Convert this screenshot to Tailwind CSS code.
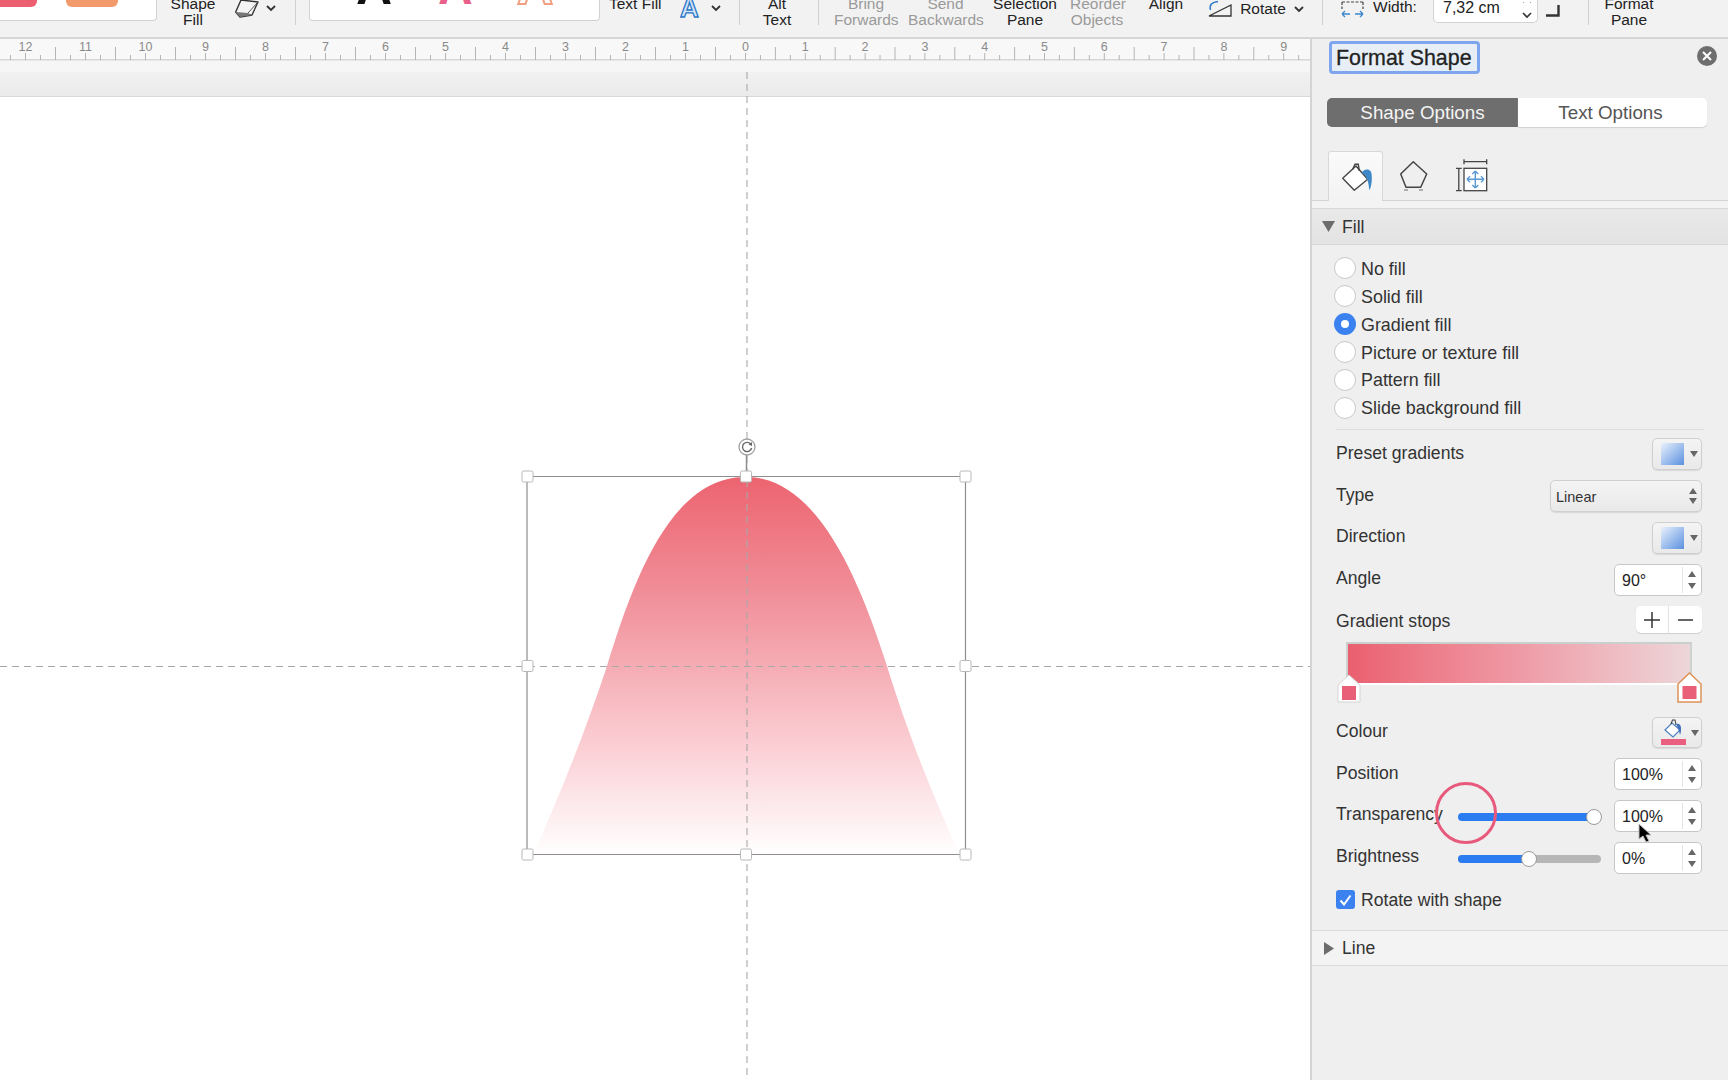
<!DOCTYPE html>
<html lang="en">
<head>
<meta charset="utf-8">
<title>Format Shape</title>
<script src="https://cdn.jsdelivr.net/npm/@tailwindcss/browser@4"></script>
</head>
<body class="bg-white">
<div class="w-[1728px] h-[1080px] overflow-hidden flex flex-col font-['Liberation_Sans',Arial,sans-serif] text-[#2a2a2a]">

  <!-- ribbon, its top is cut off in the picture -->
  <div class="h-[39px] shrink-0 bg-[#f2f2f2] border-b-2 border-[#d6d6d6] flex items-start overflow-hidden text-[15.5px] leading-[16px] text-center text-[#222]">
    <div class="w-[157px] h-[21px] shrink-0 bg-white border-r border-b border-[#d2d2d2] rounded-br-[4px] flex items-start">
      <div class="w-[37px] h-[7px] bg-[#ec5f70] rounded-br-[6px]"></div>
      <div class="ml-[29px] w-[52px] h-[7px] bg-[#f29a6c] rounded-b-[6px]"></div>
    </div>
    <div class="w-[72px] shrink-0 -mt-[4px]">Shape<br>Fill</div>
    <div class="w-[66px] shrink-0 pl-[6px] flex items-start">
      <svg class="w-[24px] h-[18px]" viewBox="0 0 24 18"><path d="M6 0 23 2 17 15 5 17 .7 12z" fill="#f4f4f4" stroke="#333" stroke-width="1.400" stroke-linejoin="round"/><path d="M.7 12 13 13l4 2-12 2z" fill="#777"/><path d="M13 13 23 2" stroke="#555" stroke-width="1"/></svg>
      <svg class="ml-[7px] mt-[5px] w-[10px] h-[7px]" viewBox="0 0 10 7"><path d="M1 1l4 4 4-4" fill="none" stroke="#333" stroke-width="1.800"/></svg>
    </div>
    <div class="w-px h-[25px] shrink-0 bg-[#d0d0d0]"></div>
    <div class="ml-[13px] w-[291px] h-[21px] shrink-0 bg-white border border-t-0 border-[#d2d2d2] rounded-b-[4px] overflow-hidden">
      <svg class="w-[290px] h-[20px] font-['Liberation_Sans',Arial,sans-serif]" viewBox="0 0 290 20">
        <text x="46" y="4" font-size="50" font-weight="700" fill="#111">A</text>
        <text x="128" y="4" font-size="48" font-weight="700" fill="#e8608a">A</text>
        <text x="207" y="4" font-size="50" font-weight="700" fill="#fff" stroke="#f0a080" stroke-width="2">A</text>
      </svg>
    </div>
    <div class="ml-[9px] w-[60px] shrink-0 -mt-[4px] whitespace-nowrap text-left">Text Fill</div>
    <svg class="ml-[11px] w-[21px] h-[18px] shrink-0 font-['Liberation_Sans',Arial,sans-serif]" viewBox="0 0 21 18"><text x="0" y="17" font-size="26" font-weight="700" fill="#d4e4f6" stroke="#2a78c8" stroke-width="1.300">A</text></svg>
    <svg class="ml-[10px] mt-[5px] w-[10px] h-[7px] shrink-0" viewBox="0 0 10 7"><path d="M1 1l4 4 4-4" fill="none" stroke="#333" stroke-width="1.800"/></svg>
    <div class="ml-[18px] w-px h-[25px] shrink-0 bg-[#d0d0d0]"></div>
    <div class="w-[74px] shrink-0 -mt-[4px]">Alt<br>Text</div>
    <div class="ml-[4px] w-px h-[25px] shrink-0 bg-[#d0d0d0]"></div>
    <div class="ml-[15px] w-[64px] shrink-0 -mt-[4px] text-[#9a9a9a]">Bring<br>Forwards</div>
    <div class="ml-[10px] w-[75px] shrink-0 -mt-[4px] text-[#9a9a9a]">Send<br>Backwards</div>
    <div class="ml-[10px] w-[64px] shrink-0 -mt-[4px]">Selection<br>Pane</div>
    <div class="ml-[13px] w-[54px] shrink-0 -mt-[4px] text-[#9a9a9a]">Reorder<br>Objects</div>
    <div class="ml-[18px] w-[48px] shrink-0 -mt-[4px]">Align</div>
    <svg class="ml-[18px] w-[24px] h-[18px] shrink-0" viewBox="0 0 24 18"><path d="M1 16 23 5v11z" fill="none" stroke="#333" stroke-width="1.300"/><path d="M2.500 10C1 5 4 2 10 1.500" fill="none" stroke="#2a78c8" stroke-width="1.500"/></svg>
    <div class="ml-[5px] w-[52px] shrink-0 mt-[1px]">Rotate</div>
    <svg class="ml-[5px] mt-[6px] w-[10px] h-[7px] shrink-0" viewBox="0 0 10 7"><path d="M1 1l4 4 4-4" fill="none" stroke="#333" stroke-width="1.800"/></svg>
    <div class="ml-[18px] w-px h-[25px] shrink-0 bg-[#d0d0d0]"></div>
    <svg class="ml-[18px] w-[23px] h-[18px] shrink-0" viewBox="0 0 23 18"><path d="M1 2h21M1 2v7M22 2v7" fill="none" stroke="#444" stroke-width="1.200" stroke-dasharray="3 1.500"/><path d="M1 14h8M14 14h8M1 14l3-3M1 14l3 3M22 14l-3-3M22 14l-3 3" fill="none" stroke="#3b86cc" stroke-width="1.300"/></svg>
    <div class="ml-[9px] w-[44px] shrink-0 mt-[-1px] text-left">Width:</div>
    <div class="ml-[16px] w-[105px] h-[23px] shrink-0 bg-white border border-t-0 border-[#d2d2d2] rounded-b-[5px] flex items-start pl-[9px] text-[16px] text-left">
      <span class="flex-1">7,32 cm</span>
      <svg class="mt-[2px] mr-[5px] w-[10px] h-[18px]" viewBox="0 0 10 18"><path d="M1 0l4-3 4 3M1 11l4 4 4-4" fill="none" stroke="#333" stroke-width="1.600"/></svg>
    </div>
    <svg class="ml-[8px] mt-[5px] w-[14px] h-[12px] shrink-0" viewBox="0 0 14 12"><path d="M0 10.500h12.500V0" fill="none" stroke="#333" stroke-width="2.400"/></svg>
    <div class="ml-[28px] w-px h-[25px] shrink-0 bg-[#d0d0d0]"></div>
    <div class="w-[80px] shrink-0 -mt-[4px]">Format<br>Pane</div>
  </div>

  <div class="flex flex-1 min-h-0">
    <!-- slide area -->
    <div class="w-[1310px] shrink-0 flex flex-col">
      <svg id="ruler" class="w-[1310px] h-[21px] shrink-0 bg-[#f8f8f8] font-['Liberation_Sans',Arial,sans-serif]" viewBox="0 39 1310 21"></svg>
      <div class="relative flex-1 flex flex-col">
        <div class="h-[12px] bg-[#f6f6f6] border-t border-[#e6e6e6]"></div>
        <div class="h-[25px] bg-linear-to-b from-[#f1f1f1] to-[#ebebeb] border-b border-[#d9d9d9]"></div>
        <div class="flex-1 bg-white"></div>
        <svg class="absolute left-0 top-0 w-[1310px] h-[1020px]" viewBox="0 60 1310 1020">
          <defs>
            <linearGradient id="bell" x1="0" y1="0" x2="0" y2="1">
              <stop offset="0" stop-color="#ec6470"/>
              <stop offset="0.3" stop-color="#f08d97"/>
              <stop offset="0.5" stop-color="#f5acb4"/>
              <stop offset="0.72" stop-color="#fbd0d5"/>
              <stop offset="0.9" stop-color="#fdeef0"/>
              <stop offset="1" stop-color="#ffffff"/>
            </linearGradient>
          </defs>
          <path d="M533 855C560 795 587 727 607 666C635 575 672 477 746 477C815 477 857 572 887 666C905 725 932 795 960 855Z" fill="url(#bell)"/>
          <g fill="none" stroke="#a8a8a8" stroke-width="1.100" stroke-dasharray="7 5">
            <path d="M747 72V1080"/>
            <path d="M0 666.500H1310"/>
          </g>
          <path d="M527 476.500H965.500V854.500H527Z" fill="none" stroke="#8e8e8e" stroke-width="1.200"/>
          <path d="M746.500 455V476" stroke="#8f8f8f" stroke-width="1.500"/>
          <g fill="#fff" stroke="#b8b8b8" stroke-width="1">
            <rect x="522" y="471" width="11" height="11" rx="1.500"/>
            <rect x="740.500" y="471" width="11" height="11" rx="1.500"/>
            <rect x="960" y="471" width="11" height="11" rx="1.500"/>
            <rect x="522" y="660.500" width="11" height="11" rx="1.500"/>
            <rect x="960" y="660.500" width="11" height="11" rx="1.500"/>
            <rect x="522" y="849" width="11" height="11" rx="1.500"/>
            <rect x="740.500" y="849" width="11" height="11" rx="1.500"/>
            <rect x="960" y="849" width="11" height="11" rx="1.500"/>
          </g>
          <circle cx="747" cy="447" r="8" fill="#fff" stroke="#a0a0a0" stroke-width="1.300"/>
          <path d="M751 444.500a4.600 4.600 0 1 0 .6 3.500" fill="none" stroke="#666" stroke-width="1.400"/>
          <path d="M748.500 444.500l3.500-2.500v4z" fill="#666"/>
        </svg>
      </div>
    </div>

    <!-- format pane -->
    <div class="w-[418px] shrink-0 bg-[#efefef] border-l-2 border-[#d4d4d4] flex flex-col text-[17.6px] leading-[22px] text-[#333]">
      <div class="h-[59px] shrink-0 flex items-start pl-[17px] pr-[11px] pt-[2px]">
        <div class="w-[151px] h-[33px] border-[3px] border-[#7ea6ee] rounded-[4px] bg-[#e8eef6] text-[21.4px] leading-[29px] text-[#222] pl-[4px] whitespace-nowrap [-webkit-text-stroke:0.3px_#222]">Format Shape</div>
        <div class="ml-auto mt-[5px] w-[20px] h-[20px] rounded-full bg-[#6e6e6e] flex items-center justify-center">
          <svg class="w-[10px] h-[10px]" viewBox="0 0 10 10"><path d="M1 1l8 8M9 1l-8 8" stroke="#fff" stroke-width="2"/></svg>
        </div>
      </div>
      <div class="ml-[15px] w-[380px] h-[29px] shrink-0 flex text-[18.8px] leading-[29px] text-center">
        <div class="w-[191px] bg-[#6e6e6e] text-[#f4f4f4] rounded-l-[5px]">Shape Options</div>
        <div class="w-[189px] pr-[4px] bg-white text-[#555] rounded-r-[5px] shadow-[0_1px_1px_#d0d0d0]">Text Options</div>
      </div>
      <div class="mt-[24px] h-[50px] shrink-0 border-b border-[#d2d2d2] flex items-end pl-[16px]">
        <div class="w-[55px] h-[50px] -mb-px bg-linear-to-b from-[#fafafa] to-[#f3f3f3] border border-b-0 border-[#d8d8d8] rounded-t-[3px] flex items-center justify-center">
          <svg class="w-[32px] h-[30px]" viewBox="0 0 32 30"><path d="M2.700 16.300 16 4 27.700 17.300 14.300 28.300z" fill="#fff" stroke="#444" stroke-width="1.400" stroke-linejoin="round"/><path d="M12.700 7.300 15 2.300h3.300L19.300 9" fill="none" stroke="#444" stroke-width="1.400"/><path d="M21.700 10.700C23 8 28 5.500 31 9.700 32.500 14 32 24 29.300 28.300 29 24 28 19 27 17.300 26 14 24 12 21.700 10.700z" fill="#3f88c8"/></svg>
        </div>
        <svg class="ml-[15px] mb-[9px] w-[30px] h-[32px]" viewBox="0 0 30 32"><path d="M15.300 2.700 28.700 15 22.700 28.300H8L2.700 15z" fill="none" stroke="#444" stroke-width="1.500" stroke-linejoin="round"/><path d="M6 31h4M21 31h4" stroke="#999" stroke-width="1.500"/></svg>
        <svg class="ml-[28px] mb-[7px] w-[34px] h-[34px]" viewBox="0 0 34 34"><path d="M8 2.700h22.700M8 .3v5M30.700 .3v5M2.800 9.300v22.400M0 9.300h5.700M0 31.700h5.700" fill="none" stroke="#444" stroke-width="1.300"/><rect x="8" y="9.300" width="22.700" height="22.400" fill="#fff" stroke="#444" stroke-width="1.300"/><path d="M19.300 12v17M11 20.300h17M19.300 12l-3 3M19.300 12l3 3M19.300 29l-3-3M19.300 29l3-3M11 20.300l3-3M11 20.300l3 3M28 20.300l-3-3M28 20.300l-3 3" fill="none" stroke="#5b9bd5" stroke-width="1.400"/></svg>
      </div>
      <div class="h-[7px] shrink-0 bg-[#f3f3f3]"></div>
      <div class="h-[37px] shrink-0 bg-linear-to-b from-[#e9e9e9] to-[#e3e3e3] border-y border-[#d8d8d8] flex items-center pl-[10px]">
        <svg class="w-[13px] h-[11px]" viewBox="0 0 13 11"><path d="M0 0h13L6.500 11z" fill="#6c6c6c"/></svg>
        <span class="ml-[7px]">Fill</span>
      </div>

      <div class="mt-[12px] ml-[22px] flex flex-col gap-[6px] shrink-0 text-[17.9px]">
        <div class="h-[22px] flex items-center"><span class="w-[22px] h-[22px] rounded-full bg-white border border-[#c9c9c9]"></span><span class="ml-[5px] pt-[1px]">No fill</span></div>
        <div class="h-[22px] flex items-center"><span class="w-[22px] h-[22px] rounded-full bg-white border border-[#c9c9c9]"></span><span class="ml-[5px] pt-[1px]">Solid fill</span></div>
        <div class="h-[22px] flex items-center"><span class="w-[22px] h-[22px] rounded-full bg-[#3b82f0] flex items-center justify-center"><span class="w-[8px] h-[8px] rounded-full bg-white"></span></span><span class="ml-[5px] pt-[1px]">Gradient fill</span></div>
        <div class="h-[22px] flex items-center"><span class="w-[22px] h-[22px] rounded-full bg-white border border-[#c9c9c9]"></span><span class="ml-[5px] pt-[1px]">Picture or texture fill</span></div>
        <div class="h-[22px] flex items-center"><span class="w-[22px] h-[22px] rounded-full bg-white border border-[#c9c9c9]"></span><span class="ml-[5px]">Pattern fill</span></div>
        <div class="h-[22px] flex items-center"><span class="w-[22px] h-[22px] rounded-full bg-white border border-[#c9c9c9]"></span><span class="ml-[5px]">Slide background fill</span></div>
      </div>
      <div class="mt-[10px] ml-[24px] mr-[24px] h-px shrink-0 bg-[#dcdcdc]"></div>

      <div class="mt-[8px] ml-[24px] mr-[26px] flex flex-col gap-[10px] shrink-0">
        <div class="h-[32px] flex items-center justify-between">
          <span class="pb-[3px]">Preset gradients</span>
          <div class="w-[50px] h-[32px] rounded-[5px] border border-[#cfcfcf] bg-linear-to-b from-[#f4f4f4] to-[#e9e9e9] flex items-center pl-[8px] shadow-[0_1px_1px_#d8d8d8]">
            <span class="w-[23px] h-[22px] bg-linear-to-br from-[#eaf1fb] to-[#5b90de]"></span>
            <svg class="ml-[6px] w-[8px] h-[6px]" viewBox="0 0 8 6"><path d="M0 0h8L4 6z" fill="#666"/></svg>
          </div>
        </div>
        <div class="h-[32px] flex items-center justify-between">
          <span class="pb-[3px]">Type</span>
          <div class="w-[152px] h-[32px] rounded-[5px] border border-[#cfcfcf] bg-linear-to-b from-[#f4f4f4] to-[#e9e9e9] flex items-center pl-[5px] pr-[4px] text-[14.5px] text-[#333] shadow-[0_1px_1px_#d8d8d8]">
            <span class="flex-1 pt-[2px]">Linear</span>
            <span class="flex flex-col gap-[4px]">
              <svg class="w-[8px] h-[6px]" viewBox="0 0 8 6"><path d="M4 0l4 6H0z" fill="#666"/></svg>
              <svg class="w-[8px] h-[6px]" viewBox="0 0 8 6"><path d="M0 0h8L4 6z" fill="#666"/></svg>
            </span>
          </div>
        </div>
        <div class="h-[32px] flex items-center justify-between">
          <span class="pb-[5px]">Direction</span>
          <div class="w-[50px] h-[32px] rounded-[5px] border border-[#cfcfcf] bg-linear-to-b from-[#f4f4f4] to-[#e9e9e9] flex items-center pl-[8px] shadow-[0_1px_1px_#d8d8d8]">
            <span class="w-[23px] h-[22px] bg-linear-to-br from-[#eaf1fb] to-[#5b90de]"></span>
            <svg class="ml-[6px] w-[8px] h-[6px]" viewBox="0 0 8 6"><path d="M0 0h8L4 6z" fill="#666"/></svg>
          </div>
        </div>
        <div class="h-[32px] flex items-center justify-between">
          <span class="pb-[5px]">Angle</span>
          <div class="w-[88px] h-[32px] rounded-[5px] border border-[#c6c6c6] bg-white flex items-center pl-[7px] text-[16px] text-[#222]">
            <span class="flex-1 pt-[2px]">90°</span>
            <span class="w-[19px] h-[26px] border-l border-[#e4e4e4] flex flex-col items-center justify-center gap-[6px]">
              <svg class="w-[8px] h-[6px]" viewBox="0 0 8 6"><path d="M4 0l4 6H0z" fill="#666"/></svg>
              <svg class="w-[8px] h-[6px]" viewBox="0 0 8 6"><path d="M0 0h8L4 6z" fill="#666"/></svg>
            </span>
          </div>
        </div>
        <div class="h-[27px] flex items-center justify-between">
          <span class="pt-[3px]">Gradient stops</span>
          <div class="w-[66px] h-[27px] rounded-[5px] bg-white flex items-center shadow-[0_1px_1px_#cfcfcf]">
            <span class="w-[33px] h-[27px] border-r border-[#e2e2e2] flex items-center justify-center"><svg class="w-[16px] h-[16px]" viewBox="0 0 16 16"><path d="M8 0v16M0 8h16" stroke="#333" stroke-width="1.500"/></svg></span>
            <span class="flex-1 flex items-center justify-center"><svg class="w-[15px] h-[2px]" viewBox="0 0 15 2"><path d="M0 1h15" stroke="#333" stroke-width="1.500"/></svg></span>
          </div>
        </div>
      </div>

      <!-- gradient stop bar -->
      <div class="relative mt-[9px] ml-[34px] w-[346px] h-[61px] shrink-0">
        <div class="h-[43px] border-2 border-t-[#c8cfcd] border-x-[#ccd2d0] border-b-white bg-linear-to-r from-[#ea5f70] via-[#ee9aa6] to-[#ecd6d9]"></div>
        <svg class="absolute -left-[9px] top-[32px] w-[24px] h-[30px]" viewBox="0 0 24 30"><path d="M1 11 12 1l11 10v17H1z" fill="#fff" stroke="#d4d4d4"/><rect x="5" y="12" width="14" height="14" fill="#e95f78"/></svg>
        <svg class="absolute left-[331px] top-[30px] w-[25px] h-[32px]" viewBox="0 0 25 32"><path d="M1 12 12.500 1 24 12v18H1z" fill="#fff" stroke="#dd9258" stroke-width="1.500"/><rect x="5.500" y="14" width="14" height="13" fill="#e95f78"/></svg>
      </div>

      <div class="mt-[14px] ml-[24px] mr-[26px] flex flex-col gap-[10px] shrink-0">
        <div class="h-[31px] flex items-center justify-between">
          <span class="pb-[3px]">Colour</span>
          <div class="w-[50px] h-[31px] rounded-[5px] border border-[#cfcfcf] bg-linear-to-b from-[#f4f4f4] to-[#e9e9e9] flex items-center pl-[7px] shadow-[0_1px_1px_#d8d8d8]">
            <span class="w-[26px] h-[27px] flex flex-col items-center">
              <svg class="w-[20px] h-[20px]" viewBox="0 0 20 20"><path d="M2 11 9 4l8 7-7 7z" fill="#fff" stroke="#4a7fc0" stroke-width="1.200"/><path d="M8 5 9.500 1h2.500L13 6" fill="none" stroke="#444" stroke-width="1.100"/><path d="M13 5c3-1 5 1 5 4 0 2 0 5-1 7-.5-3-1-5-4-11z" fill="#3f70b8"/></svg>
              <span class="w-[25px] h-[6px] bg-[#ea5f80]"></span>
            </span>
            <svg class="ml-[5px] w-[8px] h-[6px]" viewBox="0 0 8 6"><path d="M0 0h8L4 6z" fill="#666"/></svg>
          </div>
        </div>
        <div class="h-[32px] flex items-center justify-between">
          <span class="pb-[3px]">Position</span>
          <div class="w-[88px] h-[32px] rounded-[5px] border border-[#c6c6c6] bg-white flex items-center pl-[7px] text-[16px] text-[#222]">
            <span class="flex-1 pt-[2px]">100%</span>
            <span class="w-[19px] h-[26px] border-l border-[#e4e4e4] flex flex-col items-center justify-center gap-[6px]">
              <svg class="w-[8px] h-[6px]" viewBox="0 0 8 6"><path d="M4 0l4 6H0z" fill="#666"/></svg>
              <svg class="w-[8px] h-[6px]" viewBox="0 0 8 6"><path d="M0 0h8L4 6z" fill="#666"/></svg>
            </span>
          </div>
        </div>
        <div class="h-[32px] flex items-center">
          <span class="flex-1 pb-[4px] whitespace-nowrap">Transparency</span>
          <div class="relative w-[143px] h-[8px] mt-[2px] rounded-full bg-[#2b7cf0] mr-[13px]">
            <span class="absolute -right-[1px] -top-[4px] w-[16px] h-[16px] rounded-full bg-white border border-[#9a9a9a]"></span>
            <span class="absolute -left-[23px] -top-[31px] w-[62px] h-[62px] rounded-full border-[3px] border-[#e85a7c]"></span>
          </div>
          <div class="relative w-[88px] h-[32px] rounded-[5px] border border-[#c6c6c6] bg-white flex items-center pl-[7px] text-[16px] text-[#222]">
            <span class="flex-1 pt-[2px]">100%</span>
            <span class="w-[19px] h-[26px] border-l border-[#e4e4e4] flex flex-col items-center justify-center gap-[6px]">
              <svg class="w-[8px] h-[6px]" viewBox="0 0 8 6"><path d="M4 0l4 6H0z" fill="#666"/></svg>
              <svg class="w-[8px] h-[6px]" viewBox="0 0 8 6"><path d="M0 0h8L4 6z" fill="#666"/></svg>
            </span>
            <svg class="absolute left-[22px] top-[21px] w-[16px] h-[24px]" viewBox="0 0 16 24"><path d="M2 2v15l4-3 3 6 3-1-3-6h5z" fill="#000" stroke="#bbb" stroke-width="1"/></svg>
          </div>
        </div>
        <div class="h-[32px] flex items-center">
          <span class="flex-1 pb-[5px]">Brightness</span>
          <div class="relative w-[143px] h-[8px] mt-[2px] rounded-full bg-[#b6b6b6] mr-[13px]">
            <div class="w-[71px] h-[8px] rounded-l-full bg-[#2b7cf0]"></div>
            <span class="absolute left-[63px] -top-[4px] w-[16px] h-[16px] rounded-full bg-white border border-[#9a9a9a]"></span>
          </div>
          <div class="w-[88px] h-[32px] rounded-[5px] border border-[#c6c6c6] bg-white flex items-center pl-[7px] text-[16px] text-[#222]">
            <span class="flex-1 pt-[2px]">0%</span>
            <span class="w-[19px] h-[26px] border-l border-[#e4e4e4] flex flex-col items-center justify-center gap-[6px]">
              <svg class="w-[8px] h-[6px]" viewBox="0 0 8 6"><path d="M4 0l4 6H0z" fill="#666"/></svg>
              <svg class="w-[8px] h-[6px]" viewBox="0 0 8 6"><path d="M0 0h8L4 6z" fill="#666"/></svg>
            </span>
          </div>
        </div>
      </div>

      <div class="mt-[16px] ml-[24px] h-[19px] flex items-center shrink-0">
        <span class="w-[19px] h-[19px] rounded-[3px] bg-[#3b82f0] flex items-center justify-center">
          <svg class="w-[13px] h-[12px]" viewBox="0 0 13 12"><path d="M1.500 6.500 5 10.500 11.500 1.500" fill="none" stroke="#fff" stroke-width="2"/></svg>
        </span>
        <span class="ml-[6px] pt-[1px]">Rotate with shape</span>
      </div>

      <div class="mt-[21px] h-[36px] shrink-0 bg-[#f3f3f3] border-y border-[#d9d9d9] flex items-center pl-[12px]">
        <svg class="w-[10px] h-[13px]" viewBox="0 0 10 13"><path d="M0 0l10 6.500L0 13z" fill="#6c6c6c"/></svg>
        <span class="ml-[8px]">Line</span>
      </div>
    </div>
  </div>
</div>

<script>
  // Ruler: one label per unit around the 0 at x=745, with half and quarter ticks
  const ruler = document.getElementById('ruler');
  const zero = 745.5;
  let out = '<path d="M0 59.500H1310" stroke="#d8d8d8"/>';
  for (let q = -52; q <= 40; q++) {
    const unit = q < 0 ? 60 : 59.8;
    const x = zero + q * unit / 4;
    if (x < 0 || x > 1308) continue;
    const top = q % 4 === 0 ? 53 : (q % 2 === 0 ? 47 : 55);
    out += `<path d="M${x} ${top}V60" stroke="#b4b4b4"/>`;
    if (q % 4 === 0) {
      out += `<text x="${x}" y="51" font-size="12.500" text-anchor="middle" fill="#8a8a8a">${Math.abs(q / 4)}</text>`;
    }
  }
  ruler.innerHTML = out;
</script>
</body>
</html>
